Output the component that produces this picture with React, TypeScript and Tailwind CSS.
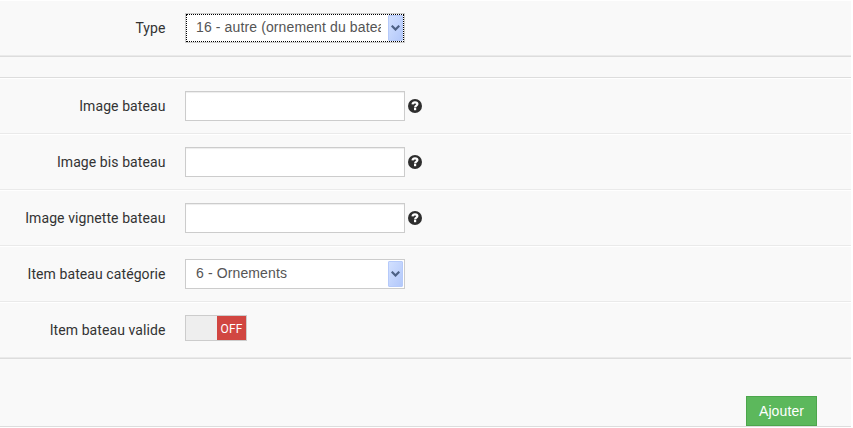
import React from "react";

function Row({ label, children }: { label: string; children: React.ReactNode }) {
  return (
    <div className="flex h-14 items-start border-t border-b border-t-white border-b-[#eaeaea] pt-3">
      <label className="w-[165.500px] shrink-0 pt-[5px] text-right font-[Roboto,sans-serif] text-sm leading-5 tracking-[0.085px] whitespace-nowrap text-[#333]">
        {label}
      </label>
      <div className="ml-[19.500px] flex items-start">{children}</div>
    </div>
  );
}

function Help() {
  return (
    <svg className="mt-2 ml-[3px] h-[14px] w-[14px]" viewBox="0 0 14 14">
      <circle cx="7" cy="7" r="7" fill="#2e2e2e" />
      <path
        d="M4.500 5.300C4.700 4 5.600 3.300 7 3.300c1.500 0 2.400.7 2.400 1.800 0 1.500-2.300 1.500-2.300 3.300"
        fill="none"
        stroke="#fff"
        strokeWidth="2.200"
      />
      <rect x="6" y="9" width="2.200" height="2.200" fill="#fff" />
    </svg>
  );
}

function TextField() {
  return (
    <>
      <input
        type="text"
        className="h-[30px] w-[220px] border border-[#ccc] bg-white px-2.5 shadow-[inset_0_1px_1px_rgba(0,0,0,0.075)] outline-none"
      />
      <Help />
    </>
  );
}

function Select({ value, focused = false }: { value: string; focused?: boolean }) {
  return (
    <div className="h-[30px] w-[220px] border border-[#ccc] bg-white">
      <div
        className={`flex h-full items-stretch border border-dotted ${focused ? "border-black" : "border-transparent"}`}
      >
        <div className="ml-[9px] w-[185px] overflow-hidden font-['Liberation_Sans',Arial,sans-serif] text-sm leading-[25px] tracking-[0.120px] whitespace-nowrap text-[#555]">
          {value}
        </div>
        <div className="ml-auto flex w-[15px] items-center justify-center rounded-[1px] border border-[#b6cafa] bg-linear-to-br from-[#d2e0ff] to-[#b3c8fa]">
          <svg className="h-[6px] w-[9px] shrink-0" viewBox="0 0 9 6">
            <path d="M.7.7 4.500 4.500 8.300.7" fill="none" stroke="#4d6185" strokeWidth="2.200" />
          </svg>
        </div>
      </div>
    </div>
  );
}

export default function App() {
  return (
    <div className="h-[428px] w-[853px] overflow-hidden bg-white">
      <div className="h-[427px] w-[851px] bg-[#f9f9f9]">
        <Row label="Type">
          <Select value="16 - autre (ornement du bateau)" focused />
        </Row>
        <div className="h-[22px] border-y border-[#ddd]" />
        <Row label="Image bateau">
          <TextField />
        </Row>
        <Row label="Image bis bateau">
          <TextField />
        </Row>
        <Row label="Image vignette bateau">
          <TextField />
        </Row>
        <Row label="Item bateau catégorie">
          <Select value="6 - Ornements" />
        </Row>
        <Row label="Item bateau valide">
          <div className="flex h-[26px] w-[62px] border border-[#ccc] bg-[#eee]">
            <div className="ml-auto w-[29px] bg-[#d14641] text-center font-[Roboto,sans-serif] text-xs leading-[26px] tracking-[0.200px] text-white">
              OFF
            </div>
          </div>
        </Row>
        <div className="flex h-[69px] items-end justify-end border-y border-[#ddd] pr-[34px]">
          <button className="h-[30px] w-[71px] border border-[#4ca64c] bg-[#5cb85c] font-['Liberation_Sans',Arial,sans-serif] text-sm tracking-[0.100px] text-white">
            Ajouter
          </button>
        </div>
      </div>
    </div>
  );
}
